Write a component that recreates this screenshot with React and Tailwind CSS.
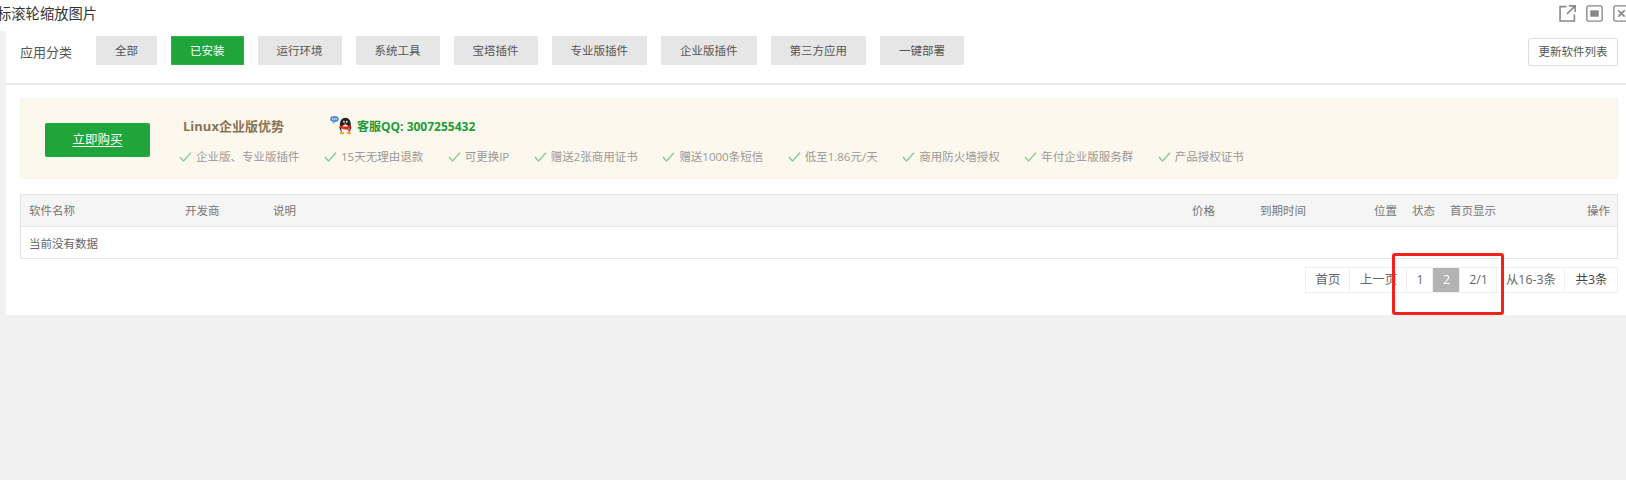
import React from 'react';

const categories = [
  { name: '全部' },
  { name: '已安装', active: true },
  { name: '运行环境' },
  { name: '系统工具' },
  { name: '宝塔插件' },
  { name: '专业版插件' },
  { name: '企业版插件' },
  { name: '第三方应用' },
  { name: '一键部署' },
];

const features = [
  '企业版、专业版插件',
  '15天无理由退款',
  '可更换IP',
  '赠送2张商用证书',
  '赠送1000条短信',
  '低至1.86元/天',
  '商用防火墙授权',
  '年付企业版服务群',
  '产品授权证书',
];

const pages = [
  { label: '首页', w: 'w-[44px]' },
  { label: '上一页', w: 'w-[57px]' },
  { label: '1', w: 'w-[26px]' },
  { label: '2', w: 'w-[27px]', active: true },
  { label: '2/1', w: 'w-[37px]' },
  { label: '从16-3条', w: 'w-[68px]' },
  { label: '共3条', w: 'w-[52px]', dark: true },
];

const QqIcon = () => (
  <svg width="24" height="20" viewBox="0 0 22 18" className="shrink-0 -mt-[4px]">
    <path d="M1 3.500C1 1.800 2.400.800 4.200.800h1.600C7.600.800 9 1.800 9 3.500S7.600 6.200 5.800 6.200H5L3.400 8l.200-2C2 5.700 1 4.900 1 3.500z" fill="#4f8fdc" />
    <circle cx="3.400" cy="3.500" r=".6" fill="#fff" />
    <circle cx="5" cy="3.500" r=".6" fill="#fff" />
    <circle cx="6.600" cy="3.500" r=".6" fill="#fff" />
    <path d="M10 9c0-4 1.800-6.600 5-6.600S20 5 20 9c0 1 .200 1.600.500 2.600L19 15h-8l-1.500-3.400C9.800 10.600 10 10 10 9z" fill="#222" />
    <ellipse cx="15" cy="12.600" rx="3.800" ry="3.800" fill="#fff" />
    <path d="M10 9.300c3 1.500 7 1.500 10 0l.4 1.800c-.9.600-1.700.9-2.500 1.100l.4 2.600-2-1.700c-1.500.2-3.500 0-6.300-1.900z" fill="#e8261f" />
    <path d="M10.400 15.400c1-.6 3-.4 3.600 1.100.2.800-3.300 1.300-4 .6-.3-.4-.1-1.300.4-1.700zM19.600 15.400c-1-.6-3-.4-3.600 1.100-.2.800 3.300 1.300 4 .6.300-.4.100-1.300-.4-1.700z" fill="#f5a623" />
    <circle cx="13.700" cy="6" r=".8" fill="#fff" />
    <circle cx="16.300" cy="6" r=".8" fill="#fff" />
    <path d="M13.600 7.600h2.800L15 8.900z" fill="#f5a623" />
  </svg>
);

const App = () => {
  return (
    <div className="relative w-[1626px] h-[480px] overflow-hidden bg-[#f1f1f1] font-['Open_Sans','Noto_Sans_CJK_SC',sans-serif]">
      {/* title bar */}
      <div className="h-[31px] pb-[3px] bg-white flex items-center justify-between">
        <span className="-ml-[3px] text-[14.300px] text-[#333] whitespace-nowrap">标滚轮缩放图片</span>
        <div className="flex items-center gap-[10px] -mt-[1px] -mr-[4px] text-[#888]">
          <svg width="17" height="17" viewBox="0 0 16 16" fill="none" stroke="currentColor" strokeWidth="1.500">
            <path d="M7 1.500H1v13.500h13.500V9M9.500 .8h5.700v5.700M15 1 7.500 8.500" />
          </svg>
          <svg width="17" height="17" viewBox="0 0 16 16" fill="none" stroke="currentColor" strokeWidth="1.300">
            <rect x=".8" y=".8" width="14.400" height="14.400" rx="1.500" />
            <rect x="4" y="5" width="8" height="6" fill="currentColor" stroke="none" />
          </svg>
          <svg width="17" height="17" viewBox="0 0 16 16" fill="none" stroke="currentColor" strokeWidth="1.300">
            <rect x=".8" y=".8" width="14.400" height="14.400" rx="1.500" />
            <path d="M5 5l6 6M11 5l-6 6" strokeWidth="1.600" />
          </svg>
        </div>
      </div>

      {/* panel */}
      <div className="ml-[6px] h-[284px] bg-white">
        {/* category row */}
        <div className="h-[54px] flex items-start pl-[14px] pr-[8px] border-b-2 border-[#ececec]">
          <span className="mt-[7px] h-[28px] leading-[28px] w-[76px] text-[13px] text-[#555]">应用分类</span>
          <div className="mt-[5px] flex gap-[14px]">
            {categories.map((c) => (
              <div
                key={c.name}
                className={
                  c.active
                    ? 'h-[29px] px-[18px] flex items-center text-[11.500px] text-white bg-[#20a53a] border border-[#2fb34a]'
                    : 'h-[29px] px-[19px] flex items-center text-[11.500px] text-[#555] bg-[#e6e6e6]'
                }
              >
                {c.name}
              </div>
            ))}
          </div>
          <button className="mt-[7px] ml-auto w-[90px] h-[28px] flex items-center justify-center text-[11.500px] text-[#555] bg-white border border-[#ddd] rounded-[2px]">
            更新软件列表
          </button>
        </div>

        <div className="pl-[14px] pr-[8px]">
          {/* enterprise banner */}
          <div className="mt-[13px] h-[81px] flex bg-[#fcf8ee] border border-[#f7f3e8] rounded-[2px]">
            <div className="ml-[24px] mt-[24px] w-[105px] h-[34px] flex items-center justify-center bg-[#20a53a] rounded-[2px] text-[12.500px] text-white underline underline-offset-2">
              立即购买
            </div>
            <div className="ml-[33px] flex flex-col">
              <div className="mt-[18px] h-[20px] flex items-center">
                <span className="w-[146px] text-[13px] font-bold text-[#8b7355]">Linux企业版优势</span>
                <QqIcon />
                <span className="ml-[4px] text-[12px] font-bold text-[#1c9c36]">客服QQ: 3007255432</span>
              </div>
              <div className="mt-[11px] -ml-[4px] flex gap-[24.500px]">
                {features.map((f) => (
                  <div key={f} className="flex items-center gap-[4px] text-[11.500px] text-[#999] whitespace-nowrap">
                    <svg width="13" height="10" viewBox="0 0 13 10" fill="none" stroke="#7fce8f" strokeWidth="1.300">
                      <path d="M1 5l3.500 4L12 .8" />
                    </svg>
                    {f}
                  </div>
                ))}
              </div>
            </div>
          </div>

          {/* software table */}
          <div className="mt-[15px] border border-[#e4e4e4] text-[11.500px]">
            <div className="h-[32px] grid grid-cols-[156px_88px_919px_68px_114px_38px_38px_1fr] items-center pl-[8px] pr-[7px] bg-[#f5f5f5] border-b border-[#e8e8e8] text-[#777]">
              <span>软件名称</span>
              <span>开发商</span>
              <span>说明</span>
              <span>价格</span>
              <span>到期时间</span>
              <span>位置</span>
              <span>状态</span>
              <span className="flex justify-between">
                <span>首页显示</span>
                <span>操作</span>
              </span>
            </div>
            <div className="h-[31px] flex items-center pl-[8px] pt-[2px] text-[#666]">当前没有数据</div>
          </div>

          {/* pagination */}
          <div className="mt-[8px] flex justify-end">
            <div className="flex h-[26px] border border-[#f0f0f0] text-[12.400px]">
              {pages.map((p) => (
                <div
                  key={p.label}
                  className={`${p.w} flex items-center justify-center pl-[1px] border-r border-[#f0f0f0] last:border-r-0 ${
                    p.active ? 'bg-[#b3b3b3] text-white' : p.dark ? 'text-[#444]' : 'text-[#666]'
                  }`}
                >
                  {p.label}
                </div>
              ))}
            </div>
          </div>
        </div>
      </div>

      {/* red annotation box over the pager */}
      <div className="absolute left-[1392px] top-[253px] w-[112px] h-[62px] border-[3px] border-[#f5201a] rounded-[3px]" />
    </div>
  );
};

export default App;
